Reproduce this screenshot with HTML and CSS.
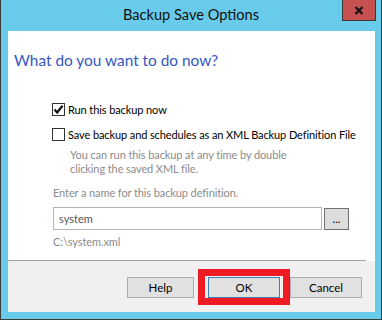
FILE: index.html
```html
<!DOCTYPE html>
<html lang="en">
  <head>
    <meta charset="UTF-8" />
    <meta name="viewport" content="width=device-width, initial-scale=1.0" />
    <title>Backup Save Options</title>
    <link rel="stylesheet" href="styles.css">
  </head>
  <body>
    <div class="window">
      <div class="titlebar">
        <span></span>
        <div class="title">Backup Save Options</div>
        <button class="close" aria-label="Close">
          <svg width="10" height="9" viewBox="0 0 10 9">
            <path d="M1.5 1 L8.5 8 M8.5 1 L1.5 8" stroke="#111" stroke-width="2.2" />
          </svg>
        </button>
      </div>

      <div class="client">
        <div class="content">
          <h1 class="heading">What do you want to do now?</h1>

          <label class="option option-first">
            <span class="checkbox">
              <svg width="11" height="11" viewBox="0 0 11 11">
                <path d="M1.5 5.5 L4.2 8.5 L9.5 1.8" fill="none" stroke="#111" stroke-width="2.2" />
              </svg>
            </span>
            Run this backup now
          </label>

          <label class="option">
            <span class="checkbox"></span>
            Save backup and schedules as an XML Backup Definition File
          </label>

          <p class="note">
            You can run this backup at any time by double<br />clicking the saved XML file.
          </p>

          <div class="field-label">Enter a name for this backup definition.</div>
          <div class="field-row">
            <input type="text" class="name-input" value="system" />
            <button class="browse">...</button>
          </div>
          <div class="path">C:\system.xml</div>
        </div>

        <div class="separator"></div>

        <div class="footer">
          <button class="btn btn-help">Help</button>
          <span class="highlight">
            <button class="btn btn-default">OK</button>
          </span>
          <button class="btn">Cancel</button>
        </div>
      </div>
    </div>
  </body>
</html>
```

FILE: styles.css
```css
html,
body {
  margin: 0;
  padding: 0;
}
body {
  font-family: Lato, "Open Sans", sans-serif;
  font-size: 11px;
  letter-spacing: -0.1px;
  color: #000;
  background-color: #69cbea;
}
.window {
  width: 382px;
  height: 320px;
  box-sizing: border-box;
  background-color: #69cbea;
  border-left: 1px solid #3b3b3b;
  border-right: 1px solid #3b3b3b;
  border-bottom: 1px solid #3b3b3b;
  padding: 0 6px 7px 7px;
  display: flex;
  flex-direction: column;
}
.titlebar {
  height: 31px;
  flex: none;
  display: grid;
  grid-template-columns: 1fr auto 1fr;
  margin: 0 -6px 0 -7px;
}
.title {
  font-size: 14.6px;
  letter-spacing: 0;
  line-height: 30px;
  color: #111;
}
.close {
  justify-self: end;
  align-self: start;
  width: 34px;
  height: 21px;
  margin-right: 5px;
  padding: 0;
  background-color: #c75050;
  border: 1px solid #3b3b3b;
  border-top: none;
  display: flex;
  align-items: center;
  justify-content: center;
}
.client {
  flex: 1;
  display: flex;
  flex-direction: column;
  background-color: #fff;
}
.content {
  flex: 1;
  padding-left: 44px;
}
.separator {
  height: 1px;
  margin-right: 9px;
  background-color: #a0a0a0;
}
.heading {
  margin: 18px 0 29px -38px;
  font-size: 15.4px;
  letter-spacing: 0;
  line-height: 22px;
  font-weight: normal;
  color: #3557c4;
}
.option {
  display: flex;
  align-items: center;
  gap: 3px;
  height: 18px;
  margin-top: 7px;
  white-space: nowrap;
}
.option-first {
  margin-top: 0;
}
.checkbox {
  flex: none;
  width: 13px;
  height: 13px;
  box-sizing: border-box;
  border: 1px solid #333;
  background-color: #fff;
  display: flex;
  align-items: center;
  justify-content: center;
}
.note {
  margin: 5px 0 0 18px;
  line-height: 14px;
  color: #8c8c8c;
}
.field-label {
  margin: 9px 0 0 1px;
  line-height: 16px;
  color: #8c8c8c;
}
.field-row {
  display: flex;
  align-items: center;
  gap: 2px;
  margin-top: 6px;
  margin-left: 1px;
}
.name-input {
  width: 269px;
  height: 23px;
  box-sizing: border-box;
  border: 1px solid #b4b4b4;
  padding: 0 5px;
  font-family: inherit;
  font-size: 11px;
  color: #555;
  outline: none;
}
.browse {
  width: 25px;
  height: 22px;
  padding: 0;
  border: 1px solid #707070;
  background-color: #dddddd;
  font-family: inherit;
  font-size: 11px;
  line-height: 1;
}
.path {
  margin: 4px 0 0 1px;
  line-height: 16px;
  color: #8c8c8c;
}
.footer {
  height: 51px;
  box-sizing: border-box;
  flex: none;
  display: flex;
  align-items: flex-start;
  justify-content: flex-end;
  padding: 8px 13px 0 0;
  background-color: #f0f0f0;
}
.btn {
  width: 72px;
  height: 21px;
  margin-top: 8px;
  padding: 0;
  border: 1px solid #adadad;
  background-color: #e1e1e1;
  font-family: inherit;
  font-size: 11.5px;
  color: #000;
}
.btn-help {
  width: 67px;
  margin-right: 4px;
}
.btn-default {
  display: block;
  margin-top: 0;
  border-color: #3c7fb1;
}
.highlight {
  display: block;
  border: 7px solid #ed1c24;
  padding: 1px 3px 0;
}
```
